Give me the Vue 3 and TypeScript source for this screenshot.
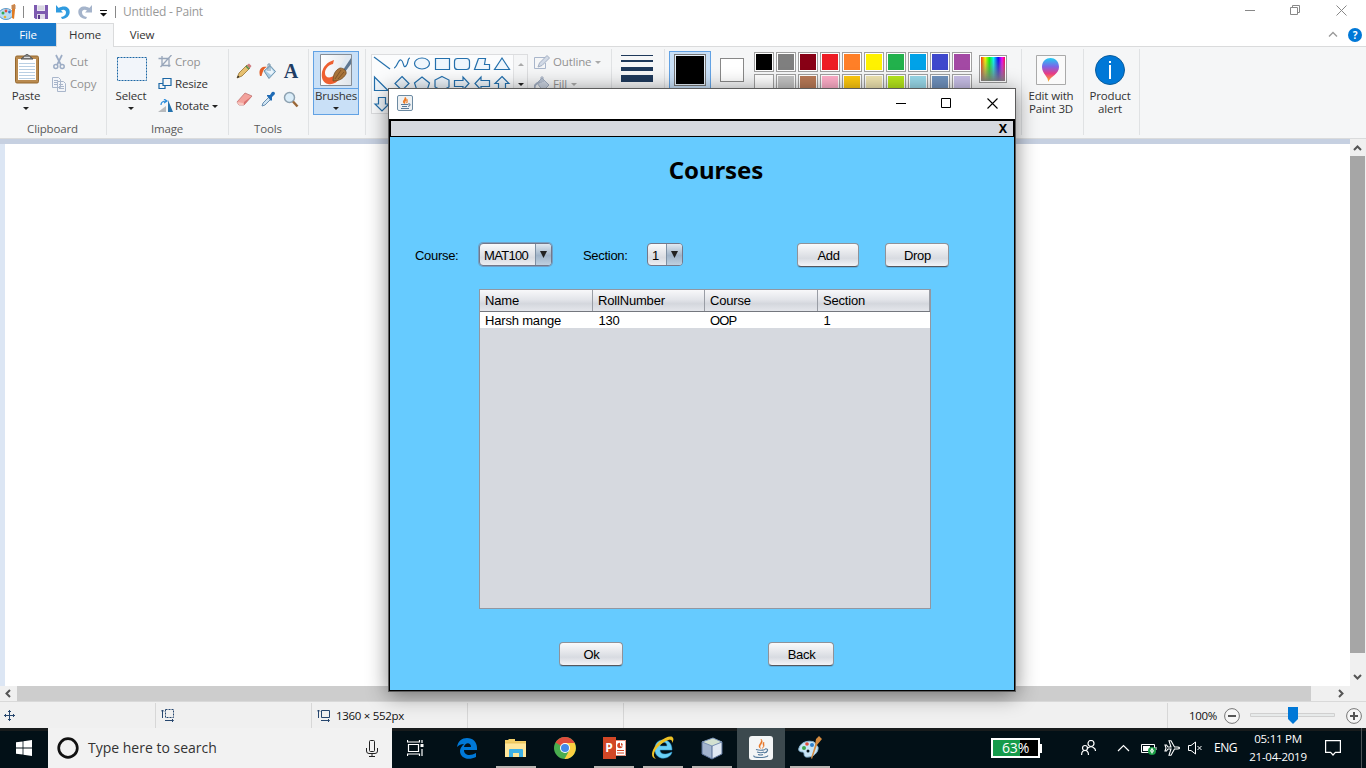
<script setup lang="ts">
const swatches: string[][] = [
  ['#000000', '#7f7f7f', '#880015', '#ed1c24', '#ff7f27', '#fff200', '#22b14c', '#00a2e8', '#3f48cc', '#a349a4'],
  ['#ffffff', '#c3c3c3', '#b97a57', '#ffaec9', '#ffc90e', '#efe4b0', '#b5e61d', '#99d9ea', '#7092be', '#c8bfe7'],
]
const shapes: string[] = [
  'M2 2L18 14', 'M2 13C5 13 6 4 9 5S11 14 14 11S15 3 18 3', 'M2.5 8.5a7.5 5.5 0 1 0 15 0a7.5 5.5 0 1 0-15 0',
  'M3.500 3.500h14v11h-14z', 'M5.500 3.500h9q3 0 3 3v5q0 3-3 3h-9q-3 0-3-3v-5q0-3 3-3z', 'M6.500 3.500H13.500L12.500 9.500H17.500V14.500H2.500L6.500 3.500', 'M10 3L17.500 14.500H2.500Z',
  'M2.500 2V15.500H16Z', 'M10 1.500L17 8.500L10 15.500L3 8.500Z', 'M10 2L17.500 8L15 15.500H5L2.500 8Z', 'M10 1.500L17 5V12L10 15.500L3 12V5Z',
  'M2.500 5.500H11V2L17 8.500L11 15V11.500H2.500Z', 'M17.500 5.500H9V2L3 8.500L9 15V11.500H17.500Z', 'M10 1.500L17 8.500H13.500V16H6.500V8.500H3Z',
  'M6.500 2.500H13.500V9H17L10 16L3 9H6.500Z',
]
const columns: string[] = ['Name', 'RollNumber', 'Course', 'Section']
const record: string[] = ['Harsh mange', '130', 'OOP', '1']
</script>

<template>
  <div class="desktop">
    <header class="titlebar">
      <svg class="app-ico" width="17" height="18" viewBox="0 0 17 18">
        <ellipse cx="6" cy="11" rx="7" ry="5.500" fill="#b9dcf3" stroke="#5d9bc9" />
        <circle cx="3" cy="10" r="1.500" fill="#35a853" /><circle cx="6" cy="8" r="1.400" fill="#e34f3e" /><circle cx="9.500" cy="9" r="1.400" fill="#3579cf" /><circle cx="5" cy="14" r="1.300" fill="#e8b030" />
        <path d="M12 2l3-1v6l-1 9-2-1z" fill="#e07b23" /><path d="M11.500 2h4v4h-4z" fill="#c78750" />
      </svg>
      <i class="tsep"></i>
      <svg class="save" width="14" height="14" viewBox="0 0 14 14"><path d="M0 0h14v14H1.500L0 12.500z" fill="#7d5ab0" /><path d="M3 0h8v6H3z" fill="#e9e6f3" /><path d="M4 2h6M4 4h6" stroke="#bbb" stroke-width=".7" /><path d="M3 9h8v5H3z" fill="#dedae8" /><path d="M4 10h2v4H4z" fill="#5a3b8a" /></svg>
      <svg class="undo" width="14" height="14" viewBox="0 0 14 14"><path d="M0 0v7.500h7L5 5.500C7.500 4 10 5 10 7.500c0 2.500-2 4-5 4.500l1 2c5-.5 7.700-3.500 7.700-7C13.700 1.500 7.500 0 2.700 3z" fill="#2f9be0" /></svg>
      <svg class="redo" width="14" height="14" viewBox="0 0 14 14"><path d="M14 0v7.500H7L9 5.500C6.500 4 4 5 4 7.500c0 2.500 2 4 5 4.500l-1 2C3 13.500.3 10.500.3 7 .3 1.500 6.500 0 11.300 3z" fill="#a5b4cb" /></svg>
      <svg class="qat" width="7" height="7" viewBox="0 0 7 7"><path d="M0 0h7v1H0zM0 3h7L3.500 6.500z" fill="#111" /></svg>
      <i class="tsep two"></i>
      <span class="doc">Untitled - Paint</span>
      <div class="syscmds">
        <svg width="10" height="11" viewBox="0 0 10 11"><path d="M0 5.500h10" stroke="#888" /></svg>
        <svg width="11" height="11" viewBox="0 0 11 11"><path d="M.5 2.500h7v7h-7zM2.500 2.500v-2h7v7h-2" fill="none" stroke="#888" /></svg>
        <svg width="11" height="11" viewBox="0 0 11 11"><path d="M.5.5l10 10M10.500.5l-10 10" stroke="#888" /></svg>
      </div>
    </header>
    <nav class="tabs">
      <b class="file">File</b><b class="home">Home</b><b class="view">View</b>
      <div class="help">
        <svg width="10" height="6" viewBox="0 0 10 6"><path d="M1 5.500l4-4 4 4" fill="none" stroke="#999" stroke-width="1.300" /></svg>
        <b class="q">?</b>
      </div>
    </nav>
    <section class="ribbon">
      <div class="group clip">
        <div class="tools-row">
          <div class="big paste">
            <svg width="26" height="32" viewBox="0 0 26 32"><rect x="1.500" y="3" width="23" height="27" rx="1.500" fill="#b98a4f" stroke="#96682f" /><path d="M4 6h18v21H4z" fill="#fff" /><path d="M5 10.500h16M5 13.500h16M5 16.500h16M5 19.500h16M5 22.500h16M5 25.500h16" stroke="#b9cfe3" /><path d="M7 6l3-2.500q3-4 6 0l3 2.500z" fill="#888" stroke="#555" /><path d="M10 4.500h6" stroke="#ddd" /></svg>
            <span>Paste</span><i class="tri"></i>
          </div>
          <div class="list off">
            <div><svg width="14" height="16" viewBox="0 0 14 16"><path d="M4 1l5 10M10 1L5 11" stroke="#9dadc5" stroke-width="1.700" fill="none" /><circle cx="3.800" cy="12.500" r="2" fill="none" stroke="#9dadc5" stroke-width="1.500" /><circle cx="10.200" cy="12.500" r="2" fill="none" stroke="#9dadc5" stroke-width="1.500" /></svg><span>Cut</span></div>
            <div><svg width="16" height="16" viewBox="0 0 16 16"><path d="M1.500 1.500h6l2 2v8h-8zM6.500 5.500h6l2 2v8h-8z" fill="#f3f5f9" stroke="#a9b6cb" /><path d="M3 4.500h4M3 6.500h3M3 8.500h3M8 8.500h4M8 10.500h5M8 12.500h5" stroke="#a9b6cb" /></svg><span>Copy</span></div>
          </div>
        </div>
        <span class="gname">Clipboard</span>
      </div>
      <div class="group image">
        <div class="tools-row">
          <div class="big select">
            <svg width="30" height="32" viewBox="0 0 30 32"><rect x=".5" y="4.500" width="29" height="23" fill="#f2f5fa" stroke="#1c67a5" stroke-dasharray="2 1" /></svg>
            <span>Select</span><i class="tri"></i>
          </div>
          <div class="list">
            <div class="off"><svg width="14" height="14" viewBox="0 0 14 14"><path d="M0 3.500h10.500V12M3.500 1v9.500H12M2 12L13 0" fill="none" stroke="#98a6ba" stroke-width="1.300" /></svg><span>Crop</span></div>
            <div><svg width="14" height="14" viewBox="0 0 14 14"><path d="M4.500 1.500h8v7h-8zM4.500 6.500h-4v5h6v-3" fill="none" stroke="#1c67a5" stroke-width="1.200" /></svg><span>Resize</span></div>
            <div><svg width="15" height="14" viewBox="0 0 15 14"><path d="M0 13l8-6v6z" fill="#b7babd" /><path d="M10 1v12h5z" fill="#2472ae" /><path d="M3 6q0-4 5-4M6 0l3 2-3 2" fill="none" stroke="#298bdb" stroke-width="1.200" /></svg><span>Rotate</span><i class="tri"></i></div>
          </div>
        </div>
        <span class="gname">Image</span>
      </div>
      <div class="group tools">
        <div class="toolgrid">
          <svg width="16" height="16" viewBox="0 0 16 16"><path d="M1 15l2-5 8-8 3 3-8 8z" fill="#e6c070" stroke="#967232" stroke-width=".8" /><path d="M11 2l2-1.500L15.500 3 14 5z" fill="#cf7c80" /><path d="M1 15l1-2.500L3.500 14z" fill="#222" /><path d="M10 3l3 3" stroke="#4d8f54" stroke-width="1.500" /></svg>
          <svg width="17" height="17" viewBox="0 0 17 17"><path d="M5 8l6-5.500 5.500 6-6.500 7z" fill="#a9cce4" stroke="#55819f" stroke-width=".8" /><path d="M7 8l4-4 4 5-3 3z" fill="#eaf4fb" /><path d="M9 8V1h2v7" stroke="#7695ac" fill="none" /><path d="M1 13C-1 6 3 3 8 4 5 5 4 8 2.500 13z" fill="#e45f28" /></svg>
          <b class="letter">A</b>
          <svg width="17" height="15" viewBox="0 0 17 15"><path d="M1 10L9 1l7 3-8 9H3z" fill="#f3a29c" stroke="#b76967" stroke-width=".7" /><path d="M8 10l8-6-8 9z" fill="#d96f6d" /><path d="M1 10l6 1 1 2H3z" fill="#f8c8c0" /></svg>
          <svg width="16" height="16" viewBox="0 0 16 16"><path d="M2 15l1-3 6-6 2 2-6 6z" fill="#cfe4f3" stroke="#5c86aa" stroke-width=".9" /><path d="M7 4l3 0 2-3q3-1 3 2l-3 3 0 3-1 1-4-5z" fill="#1f6bb5" /></svg>
          <svg width="16" height="17" viewBox="0 0 16 17"><circle cx="6.500" cy="6.500" r="5" fill="#daedf9" stroke="#8ea2b1" stroke-width="1.500" /><path d="M10 10.500l4.500 5" stroke="#9a6737" stroke-width="2.500" /></svg>
        </div>
        <span class="gname">Tools</span>
      </div>
      <div class="group brushes">
        <div class="brushbtn">
          <div class="brushpic"><svg width="32" height="32" viewBox="0 0 32 32"><defs><linearGradient id="bg"><stop offset="0" stop-color="#fff" /><stop offset="1" stop-color="#dfe4e9" /></linearGradient></defs><path d="M.5.5h31v31H.500z" fill="url(#bg)" stroke="#858d96" /><path d="M14 6l-1 4C8 11 5 15 5 19c0 5 5 6 10 2l5 3c-3 5-8 7-12 6-5-1-7-6-6-12C3 13 7 8 14 6z" fill="#ee6030" /><path d="M31 1h-4l-7 12 5 5 6-8z" fill="#dfe8f1" /><path d="M31 4l-8 12 2 2 6-8z" fill="#5d7690" /><path d="M13 27c0-6 2-11 7-13 4 0 7 3 6 6-3 5-7 7-13 7z" fill="#a87439" stroke="#6a4622" stroke-width=".7" /><path d="M15 25l6-9M18 25l6-7" stroke="#704820" stroke-width=".7" /></svg></div>
          <span>Brushes</span><i class="tri"></i>
        </div>
      </div>
      <div class="group shapes">
        <div class="gallery">
          <div class="cells"><svg v-for="(d, i) in shapes" :key="i" width="20" height="20" viewBox="0 0 20 20"><path :d="d" :fill="i < 2 ? 'none' : '#eff6fc'" stroke="#2470ad" stroke-width="1.200" /></svg></div>
          <div class="gscroll"><i class="tri up"></i><i class="tri"></i></div>
        </div>
        <div class="list off style">
          <div><svg width="16" height="15" viewBox="0 0 16 15"><path d="M.5 2.500h11M.5 2.500v11h11V8" fill="none" stroke="#a9b6cb" /><path d="M4 12l1.500-4L13 .500 15.500 3 8 10.500z" fill="#d2dae6" stroke="#a3afc3" /></svg><span>Outline</span><i class="tri"></i></div>
          <div><svg width="16" height="16" viewBox="0 0 16 16"><path d="M3 7l5-5 7 7-6 6z" fill="#cbd3e0" stroke="#a1adc0" /><path d="M1 14q-2-6 5-8" fill="none" stroke="#a1adc0" stroke-width="2" /><path d="M7 7V1h2v5" fill="none" stroke="#a1adc0" /></svg><span>Fill</span><i class="tri"></i></div>
        </div>
      </div>
      <div class="group size"><i class="l1"></i><i class="l2"></i><i class="l3"></i><i class="l4"></i></div>
      <div class="group colors">
        <div class="c1"><i></i></div>
        <i class="c2"></i>
        <div class="palette"><template v-for="(row, r) in swatches" :key="r"><i v-for="c in row" :key="c" :style="{ backgroundColor: c }"></i></template></div>
        <i class="spectrum"></i>
      </div>
      <div class="group p3d">
        <svg width="30" height="30" viewBox="0 0 30 30"><defs><linearGradient id="pin" x2="0" y2="1"><stop offset="0" stop-color="#20cdf2" /><stop offset=".35" stop-color="#7a67e8" /><stop offset=".65" stop-color="#e73b86" /><stop offset="1" stop-color="#ffbd20" /></linearGradient></defs><path d="M.5.5h29v29H.500z" fill="#fafafa" stroke="#aaa" /><path d="M12 27c1-5-6-8-6-15 0-12 17-12 17 0 0 7-8 9-11 15z" fill="url(#pin)" /></svg>
        <span>Edit with<br />Paint 3D</span>
      </div>
      <div class="group alert">
        <svg width="30" height="30" viewBox="0 0 30 30"><circle cx="15" cy="15" r="14.500" fill="#0078d7" stroke="#0b5c9c" /><path d="M15 10v14" stroke="#fff" stroke-width="2" /><path d="M15 6v2" stroke="#fff" stroke-width="2" /></svg>
        <span>Product<br />alert</span>
      </div>
    </section>
    <main class="workspace">
      <div class="viewport"><div class="canvas"></div></div>
      <div class="vscroll">
        <svg width="15" height="17" viewBox="0 0 15 17"><path d="M4 11l3.500-3.500L11 11" fill="none" stroke="#555" stroke-width="2" /></svg>
        <i></i>
        <svg width="15" height="17" viewBox="0 0 15 17"><path d="M4 7l3.500 3.500L11 7" fill="none" stroke="#555" stroke-width="2" /></svg>
      </div>
    </main>
    <div class="hscroll">
      <svg width="17" height="15" viewBox="0 0 17 15"><path d="M10 4L6.500 7.500 10 11" fill="none" stroke="#555" stroke-width="2" /></svg>
      <i></i>
      <svg class="right" width="17" height="15" viewBox="0 0 17 15"><path d="M6 4l3.500 3.500L6 11" fill="none" stroke="#555" stroke-width="2" /></svg>
    </div>
    <footer class="status">
      <div class="cell"><svg width="11" height="11" viewBox="0 0 11 11"><path d="M5.500 0v11M0 5.500h11M4 2l1.500-1.500L7 2M4 9l1.500 1.500L7 9M2 4L.5 5.500 2 7M9 4l1.500 1.500L9 7" fill="none" stroke="#26466e" /></svg></div>
      <div class="cell"><svg width="14" height="13" viewBox="0 0 14 13"><path d="M4.500.5h8v8h-8z" fill="none" stroke="#26466e" stroke-dasharray="2 1" /><path d="M1.500 9V1M0 2.500L1.500 1 3 2.500M4 11.500h8M11 10l1.500 1.500L11 13" fill="none" stroke="#26466e" /></svg></div>
      <div class="cell"><svg width="14" height="13" viewBox="0 0 14 13"><path d="M4.500 1.500h8v7h-8zM1.500 9V1M0 2.500L1.500 1 3 2.500M4 11.500h8M11 10l1.500 1.500L11 13" fill="none" stroke="#26466e" /></svg><span>1360 × 552px</span></div>
      <div class="cell"></div>
      <div class="cell wide"></div>
      <div class="zoom">
        <span>100%</span>
        <svg width="16" height="16" viewBox="0 0 16 16"><circle cx="8" cy="8" r="7.400" fill="#f6f6f6" stroke="#777" /><path d="M4 8h8" stroke="#555" stroke-width="2" /></svg>
        <svg width="85" height="18" viewBox="0 0 85 18"><path d="M.5 6.500h84v3H.500z" fill="#e7eaea" stroke="#d0d0d0" /><path d="M38 0h10v12l-5 5-5-5z" fill="#0078d7" /></svg>
        <svg width="16" height="16" viewBox="0 0 16 16"><circle cx="8" cy="8" r="7.400" fill="#f6f6f6" stroke="#777" /><path d="M4 8h8M8 4v8" stroke="#555" stroke-width="2" /></svg>
      </div>
    </footer>
    <footer class="taskbar">
      <div class="start"><svg width="16" height="16" viewBox="0 0 16 16"><path d="M0 2.300L6.600 1.400V7.600H0zM7.400 1.200L16 0V7.600H7.400zM0 8.400H6.600V14.600L0 13.700zM7.400 8.400H16V16L7.400 14.800z" fill="#fff" /></svg></div>
      <div class="search">
        <svg width="22" height="22" viewBox="0 0 22 22"><circle cx="11" cy="11" r="9.300" fill="none" stroke="#111" stroke-width="2.700" /></svg>
        <span>Type here to search</span>
        <svg class="mic" width="12" height="17" viewBox="0 0 12 17"><rect x="3.500" y=".5" width="5" height="11" rx="1" fill="none" stroke="#222" /><path d="M.5 8v3q0 2.500 2.500 2.500h6q2.500 0 2.500-2.500V8M6 13.500V16M3 16.500h6" fill="none" stroke="#222" /></svg>
      </div>
      <div class="taskview"><svg width="17" height="16" viewBox="0 0 17 16"><path d="M1.500 4.500h10v7h-10zM.500 0v2h12V0M.500 16v-2h12v2M15 0v3M15 9v7" fill="none" stroke="#fff" stroke-width="1.200" /><path d="M13.500 4h3v3h-3z" fill="#fff" /></svg></div>
      <div class="app"><svg width="20" height="21" viewBox="0 0 20 21"><path d="M0 9C1 3 5 0 10 0c6 0 10 4 10 10v2H7c0 6 7 6 12 3v4C11 23 3 20 3 13c0-3 2-5 4-7-3 .3-5 1-7 3zm7 0h7c0-5-6-5-7 0z" fill="#0078d7" /></svg></div>
      <div class="app run"><svg width="22" height="19" viewBox="0 0 22 19"><path d="M0 1h3l1-1h6v2h11v16H0z" fill="#f3cf68" /><path d="M0 4h21v14H0z" fill="#ffe79b" /><path d="M0 4h21" stroke="#e2b94e" stroke-width=".7" /><path d="M4 18v-7q0-1 1-1h12q1 0 1 1v7h-4v-4H8v4z" fill="#3db1e6" /></svg></div>
      <div class="app"><svg width="22" height="22" viewBox="0 0 22 22"><circle cx="11" cy="11" r="11" fill="#4aad4f" /><path d="M11 11L1.500 5.500A11 11 0 0 1 20.500 5.500L21 6H11z" fill="#df4d3d" /><path d="M20.600 6A11 11 0 0 1 10.500 22L15.500 13 11 6z" fill="#fdcf41" /><circle cx="11" cy="11" r="5" fill="#fff" /><circle cx="11" cy="11" r="4" fill="#4389e8" /></svg></div>
      <div class="app run"><div class="ppt"><b>P</b><svg width="10" height="18" viewBox="0 0 10 18"><path d="M0 1h10v16H0z" fill="#fff" /><path d="M0 1.500h9.500v15H0" fill="none" stroke="#d24726" stroke-width=".6" /><circle cx="4" cy="6.500" r="2.800" fill="#d24726" /><path d="M4.500 3v4h3" fill="none" stroke="#fff" /><path d="M1 11.500h7M1 14h7" stroke="#d24726" /></svg></div></div>
      <div class="app run"><svg width="24" height="24" viewBox="0 0 24 24"><path d="M4 11C5 6 8 4 12 4c6 0 9 4 9 10H9c0 5 6 5 12 2-2 9-19 9-17-5zm5-1h7c0-5-6-5-7 0z" fill="#6bd0f5" stroke="#2897d3" stroke-width=".5" /><path d="M5 23C-2 22 1 12 8 6c6-5 13-7 14-4 1 1 0 4-1 5 1-6-6-3-12 2-6 5-8 11-4 14z" fill="#eec225" /></svg></div>
      <div class="app run"><svg width="22" height="23" viewBox="0 0 22 23"><path d="M1 5l11-4 9 4v12l-10 5-10-5z" fill="#b8c9dd" /><path d="M1 5l10 4v13L1 17z" fill="#a2b4ce" /><path d="M11 9l10-4v12l-10 5z" fill="#e0e8f2" /><path d="M1 5l11-4 9 4-10 4z" fill="#d3e1d1" stroke="#7890b4" /><path d="M1 5v12l10 5V9M21 5v12l-10 5" fill="none" stroke="#536a91" /></svg></div>
      <div class="app active"><svg width="24" height="24" viewBox="0 0 24 24"><rect width="24" height="24" rx="3" fill="#f3f5f6" /><path d="M11.500 12.500C7 9 14 7.500 12 3c4 4.500-3 5.500-.5 9.500M13 12.500c3.500-3-1-4 2-6.500-.5 2.500 1.500 4-2 6.500" fill="#e87524" stroke="#e87524" stroke-width=".5" /><path d="M7 13.500q5 1.500 9 0M8 16q4 1.500 7 0M9 18.500q3 1 5 0M16 13q3-.5 2.500 1.500T15 17M5 19.500q-1 2 6 2t8-2" fill="none" stroke="#53799b" stroke-width="1.100" /></svg></div>
      <div class="app run"><svg width="24" height="24" viewBox="0 0 24 24"><path d="M1 12C3 6 10 4 16 6l4 5c1 5-5 11-12 10-3-1-1-4-3-5-3 0-5-1-4-4z" fill="#c8e5f7" stroke="#8bb7d4" /><circle cx="6" cy="12" r="2" fill="#3ba74c" /><circle cx="9" cy="8" r="1.800" fill="#e04c3a" /><circle cx="14" cy="9" r="2" fill="#2f7fca" /><circle cx="10" cy="15" r="1.500" fill="#08171d" /><path d="M18 3l3-3 3 3-5 6-5 14-1-1 4-13z" fill="#d58b40" /></svg></div>
      <div class="tray">
        <div class="battery"><b>63%</b></div>
        <svg class="people" width="15" height="16" viewBox="0 0 15 16"><circle cx="10" cy="3.500" r="3" fill="none" stroke="#fff" stroke-width="1.200" /><circle cx="4" cy="8" r="2.500" fill="none" stroke="#fff" stroke-width="1.200" /><path d="M.6 15q0-4.500 3.400-4.500T7.500 15M7 8q3-2.500 6 0 1.500 1 1.500 3" fill="none" stroke="#fff" stroke-width="1.200" /></svg>
        <svg class="chev" width="13" height="8" viewBox="0 0 13 8"><path d="M1 7l5.500-5.500L12 7" fill="none" stroke="#fff" stroke-width="1.200" /></svg>
        <svg class="bat" width="16" height="13" viewBox="0 0 16 13"><path d="M.5 2.500h13v8H.5zM15 5v3" fill="none" stroke="#fff" /><path d="M2 4h7v5H2z" fill="#fff" /><circle cx="11" cy="9" r="4" fill="#1c9d46" /><path d="M11 6.500q3 3 0 4-3-1 0-4v5" fill="none" stroke="#fff" /></svg>
        <svg class="plane" width="16" height="16" viewBox="0 0 16 16"><path d="M1 5h1.500L4 7h3L5 .800h2L10.500 7h3q2 0 2 1t-2 1h-3L7 15.200H5L7 9H4l-1.500 2H1l1-3z" fill="none" stroke="#fff" stroke-width="1.100" /></svg>
        <svg class="vol" width="15" height="14" viewBox="0 0 15 14"><path d="M.5 4.500H3L7.500 1v12L3 9.500H.500zM9.500 5l4 4M13.500 5l-4 4" fill="none" stroke="#fff" /></svg>
        <span class="eng">ENG</span>
        <div class="clock"><span>05:11 PM</span><span>21-04-2019</span></div>
        <svg class="note" width="16" height="16" viewBox="0 0 16 16"><path d="M.6.600h14.800v11.800h-5L8 15l-2.400-2.600h-5z" fill="none" stroke="#fff" stroke-width="1.200" /></svg>
        <i class="peek"></i>
      </div>
    </footer>

    <section class="jwin">
      <div class="jtitle">
        <svg class="java" width="16" height="16" viewBox="0 0 16 16"><rect x=".5" y=".5" width="15" height="15" rx="1.500" fill="#eef1f3" stroke="#6c8aa2" /><path d="M8 8.500C4 6 9.500 5 8 2.500c3 3-2 3.500 0 6M9.500 8c2-2-1-2 1-3.500" fill="none" stroke="#ed7b25" stroke-width="1.200" /><path d="M4 9.500h7M5 11.500h5M11 9q3-1 2 1.500L11 11.500M4 13.500h8" fill="none" stroke="#597a99" /></svg>
        <div class="jcmds">
          <svg width="11" height="11" viewBox="0 0 11 11"><path d="M0 5.500h10" stroke="#000" /></svg>
          <svg width="11" height="11" viewBox="0 0 11 11"><path d="M.5.5h9v9h-9z" fill="none" stroke="#000" /></svg>
          <svg width="11" height="11" viewBox="0 0 11 11"><path d="M.5.5l10 10M10.500.5l-10 10" stroke="#000" stroke-width="1.100" /></svg>
        </div>
      </div>
      <div class="jbar"><b>X</b></div>
      <div class="panel">
        <h1>Courses</h1>
        <div class="form">
          <label class="lc">Course:</label>
          <div class="combo focus"><span>MAT100</span><i><svg width="7" height="7" viewBox="0 0 7 7"><path d="M0 0h7L3.500 7z" fill="#222" /></svg></i></div>
          <label class="ls">Section:</label>
          <div class="combo short"><span>1</span><i><svg width="7" height="7" viewBox="0 0 7 7"><path d="M0 0h7L3.500 7z" fill="#222" /></svg></i></div>
          <button class="add">Add</button>
          <button class="drop">Drop</button>
        </div>
        <div class="table">
          <div class="thead"><span v-for="c in columns" :key="c">{{ c }}</span></div>
          <div class="trow"><span v-for="c in record" :key="c">{{ c }}</span></div>
        </div>
        <div class="actions"><button class="ok">Ok</button><button class="back">Back</button></div>
      </div>
    </section>
  </div>
</template>

<style>
html, body { margin: 0; overflow: hidden; }
</style>
<style scoped>
* { box-sizing: border-box; }
svg { display: block; flex: none; }
b { font-weight: 400; }
.desktop { width: 1366px; height: 768px; overflow: hidden; position: relative; display: flex; flex-direction: column; background: #fff; font: 11.500px/14px "Open Sans", "Noto Sans", sans-serif; letter-spacing: -.15px; color: #333; }
.titlebar { height: 23px; flex: none; display: flex; align-items: center; }
.tsep { width: 1px; height: 12px; background: #888; margin: 0 10px 0 6px; }
.save { margin-right: 8px; }
.undo { margin-right: 8px; }
.redo { margin-right: 8px; }
.qat { margin-top: 4px; }
.tsep.two { margin: 0 7px 0 8px; }
.doc { color: #999; font-size: 12px; letter-spacing: -.22px; }
.syscmds { margin: -3px 19px 0 auto; display: flex; gap: 35px; }
.tabs { height: 24px; flex: none; display: flex; border-bottom: 1px solid #dadbdc; }
.tabs b { width: 56px; height: 23px; line-height: 23px; text-align: center; }
.tabs .file { background: #1979ca; color: #fff; }
.tabs .home { width: 58px; height: 24px; border: 1px solid #dadbdc; border-bottom: 0; background: #f5f6f7; line-height: 22px; }
.help { margin-left: auto; margin-right: 4px; display: flex; align-items: center; gap: 10px; }
.tabs .help .q { width: 14px; height: 14px; line-height: 14px; border-radius: 50%; background: #0078d7; color: #fff; font-size: 10px; font-weight: 700; }
.tabs .help svg { margin-top: -2px; }
.ribbon { height: 92px; flex: none; display: flex; background: #f5f6f7; border-bottom: 1px solid #dadbdc; }
.group { position: relative; height: 88px; flex: none; display: flex; flex-direction: column; align-items: center; }
.group::after { content: ""; position: absolute; right: 0; top: 2px; height: 86px; width: 1px; background: #e0e2e4; }
.gname { margin-top: auto; margin-bottom: -1px; margin-left: -2px; color: #5a5a5a; letter-spacing: -.15px; }
.tools-row { display: flex; width: 100%; }
.tri { flex: none; width: 0; height: 0; border: 3px solid transparent; border-top-color: #222; border-bottom: 0; }
.big { display: flex; flex-direction: column; align-items: center; padding-top: 6px; width: 36px; }
.big span { margin: 4px 2px 4px 0; }
.big .tri { margin-right: 2px; }
.list { display: flex; flex-direction: column; padding-top: 4px; }
.list div { height: 22px; display: flex; align-items: center; gap: 4px; }
.list span { font-size: 11.500px; }
.off { color: #929292; }
.off .tri { border-top-color: #aaa; }
.clip { width: 107px; }
.paste { margin-left: 9px; }
.clip .list { margin-left: 6px; }
.clip .list svg { width: 16px; }
.clip .list div { gap: 3px; }
.image { width: 122px; }
.select { margin-left: 7px; }
.image .list { margin-left: 8px; }
.image .list svg { width: 15px; margin-right: -1px; }
.image .list div { gap: 3px; }
.tools { width: 80px; }
.toolgrid { display: grid; grid-template-columns: repeat(3, 23.500px); grid-template-rows: 28px 28px; place-items: center; margin-top: 10px; margin-left: -3px; }
.letter { font: 700 20px/20px "Liberation Serif", serif; color: #1f3d65; }
.brushes { width: 57px; align-items: flex-start; }
.brushbtn { margin: 4px 0 0 4px; width: 46px; height: 64px; border: 1px solid #62a2e4; background: #c9e0f7; display: flex; flex-direction: column; align-items: center; }
.brushpic { width: 44px; height: 37px; padding: 2px 0 0 6px; border-bottom: 1px solid #62a2e4; flex: none; }
.brushbtn span { margin-top: 0; margin-bottom: 4px; letter-spacing: -.25px; }
.shapes { width: 246px; flex-direction: row; align-items: flex-start; }
.gallery { display: flex; margin: 7px 0 0 5px; width: 157px; height: 60px; border: 1px solid #dcdddf; background: #fbfcfd; }
.cells { display: grid; grid-template-columns: repeat(7, 20px); width: 141px; height: 58px; }
.gscroll { width: 14px; border-left: 1px solid #e2e3e5; padding-top: 8px; display: flex; flex-direction: column; align-items: center; gap: 17px; background: #f5f6f7; }
.tri.up { border-top: 0; border-bottom: 3px solid #aaa; }
.style { margin-left: 6px; }
.style div { gap: 3px; }
.style .tri { margin-left: 1px; }
.size { width: 53px; align-items: flex-start; padding: 8px 0 0 9px; }
.size i { width: 32px; background: #1e395b; }
.l1 { height: 1px; margin-bottom: 4px; } .l2 { height: 2px; margin-bottom: 5px; } .l3 { height: 4px; margin-bottom: 4px; } .l4 { height: 7px; }
.colors { width: 357px; flex-direction: row; align-items: flex-start; }
.c1 { margin: 4px 0 0 4px; width: 42px; height: 64px; border: 1px solid #62a2e4; background: #c9e0f7; padding: 2px 0 0 4px; }
.c1 i { display: block; width: 32px; height: 32px; border: 1px solid #777; background: #000; box-shadow: inset 0 0 0 1px #e4effa; }
.c2 { margin: 11px 0 0 9px; width: 24px; height: 24px; border: 1px solid #888; background: #fff; }
.palette { margin: 5px 0 0 10px; display: grid; grid-template-columns: repeat(10, 20px); gap: 2px; }
.palette i { height: 20px; border: 1px solid #a0a0a0; box-shadow: inset 0 0 0 1px #fff; }
.spectrum { margin: 8px 0 0 7px; width: 28px; height: 28px; border: 1px solid #999; box-shadow: inset 0 0 0 1px #fff; background: linear-gradient(transparent, #808080), linear-gradient(90deg, red, #ff0 20%, #0f0 36%, #0ff 52%, #00f 70%, #f0f 85%, red); }
.p3d, .alert { padding-top: 8px; text-align: center; }
.p3d { width: 62px; } .alert { width: 56px; }
.p3d svg { margin-left: -4px; } .alert svg { margin-left: -4px; }
.p3d span, .alert span { margin: 4px 0 0 -4px; line-height: 13px; }
.workspace { height: 547px; flex: none; display: flex; }
.viewport { width: 1350px; padding: 5px 0 0 5px; background: linear-gradient(#c6d0e1 0 5px, #dce6f4 5px); }
.canvas { height: 542px; background: #fff; }
.vscroll { width: 16px; background: #f0f0f0; height: 547px; }
.vscroll i { display: block; height: 497px; width: 15px; background: #a6a6a6; margin-bottom: 15px; }
.hscroll { height: 15px; flex: none; display: flex; background: #f0f0f0; }
.hscroll i { width: 1294px; background: #cdcdcd; }
.hscroll .right { margin-left: 22px; }
.status { height: 27px; flex: none; background: #f0f0f0; display: flex; margin-top: 0; border-top: 1px solid #d9d9d9; padding-top: 1px; color: #111; }
.status .cell { width: 156px; border-right: 1px solid #d7d7d7; display: flex; align-items: center; padding-left: 5px; gap: 5px; letter-spacing: -.3px; }
.status .cell:first-child { padding-left: 4px; }
.status .cell.wide { width: 544px; }
.zoom { margin-left: auto; display: flex; align-items: center; padding-right: 4px; }
.zoom span { margin-right: 7px; letter-spacing: -.3px; }
.zoom svg:nth-of-type(2) { margin: 0 11px 0 10px; }
.taskbar { height: 40px; flex: none; display: flex; background: linear-gradient(#171b1c 0 3px, #021017 3px); color: #fff; }
.start { width: 48px; display: grid; place-items: center; }
.search { width: 344px; background: #f2f2f2; display: flex; align-items: center; padding-left: 9px; color: #333; }
.search span { margin-left: 9px; font-size: 14px; letter-spacing: 0; }
.mic { margin: 0 14px 0 auto; }
.taskview { width: 51px; padding: 12px 0 0 15px; }
.app { width: 48px; margin-right: 1px; display: grid; place-items: center; position: relative; }
.app svg { grid-area: 1 / 1; }
.run::after { content: ""; position: absolute; left: 4px; right: 4px; bottom: 0; height: 2px; background: #b8b5b2; }
.active { background: #3c494e; }
.ppt { display: flex; align-items: center; }
.ppt b { width: 13px; height: 22px; background: #d24726; font: 700 12px/22px "Open Sans", sans-serif; text-align: center; }
.tray { margin-left: auto; display: flex; align-items: center; height: 40px; }
.battery { width: 49px; height: 20px; margin-right: 41px; border: 2px solid #fff; background: linear-gradient(90deg, #169b4b 60%, #000 60%); position: relative; text-align: center; line-height: 16px; font-size: 14px; }
.battery::after { content: ""; position: absolute; right: -4px; top: 4px; width: 2px; height: 9px; background: #fff; }
.people { margin-right: 21px; }
.chev { margin-right: 11px; }
.bat { margin-right: 7px; }
.plane { margin-right: 8px; }
.vol { margin-right: 11px; }
.eng { width: 24px; font-size: 12px; letter-spacing: -.5px; }
.clock { width: 66px; margin: -1px 14px 0 7px; display: flex; flex-direction: column; align-items: center; line-height: 18px; letter-spacing: -.25px; white-space: nowrap; }
.note { margin-right: 20px; }
.peek { width: 1px; height: 40px; margin-right: 4px; background: #4b5357; }
.jwin { position: absolute; left: 388px; top: 88px; width: 628px; height: 604px; border: 1px solid #5c5c5c; box-shadow: 0 3px 20px rgba(0, 0, 0, .48); background: #fff; font: 13px/16px "Liberation Sans", Arial, sans-serif; letter-spacing: -.18px; color: #000; }
.jtitle { height: 30px; display: flex; align-items: center; padding: 0 17px 2px 8px; }
.jcmds { margin-left: auto; display: flex; gap: 34px; }
.jcmds svg:last-child { margin-left: 1px; }
.jbar { height: 18px; border: 2px solid #000; border-bottom-width: 1px; background: #d6d9df; text-align: right; padding-right: 6px; line-height: 15px; }
.jbar b { font: 700 12.500px/15px "Noto Sans", sans-serif; }
.panel { height: 554px; border: 1px solid #000; border-top: 0; background: #66cbff; }
h1 { margin: 0; padding: 18px 0 0 28px; font: 700 24px/30px "Noto Sans", sans-serif; letter-spacing: -.1px; text-align: center; }
.form { margin-top: 57px; height: 26px; display: flex; align-items: center; padding-left: 25px; }
label { padding-top: 1px; letter-spacing: -.3px; }
.lc { width: 63px; } .ls { width: 64px; margin-left: 31px; }
.combo { width: 74px; height: 23px; margin-top: -1px; border: 1px solid #74788a; border-radius: 4px; display: flex; overflow: hidden; background: linear-gradient(#fafafb, #d8dbe1 65%, #eceef2); line-height: 23px; }
.combo span { flex: 1; padding-left: 4px; letter-spacing: -.7px; }
.combo i { width: 16px; border-left: 1px solid #7f91a4; background: linear-gradient(#e0e8f0, #9fb3c8 55%, #bfd0e0); display: grid; place-items: center; }
.focus { box-shadow: 0 0 0 1px #739fc4; margin-left: 1px; width: 73px; }
.short { width: 36px; }
button { padding: 1px 0 0 1px; height: 24px; border: 1px solid #8f9299; border-bottom-color: #55585f; border-radius: 4px; background: linear-gradient(#fafafb, #d8dbe1 65%, #f3f4f8); font: 13px/21px "Liberation Sans", Arial, sans-serif; letter-spacing: -.3px; color: #000; box-shadow: 0 1px 0 rgba(70, 100, 130, .25); }
.add { width: 62px; margin-left: 114px; }
.drop { width: 64px; margin-left: 26px; }
.table { margin: 21px 0 0 89px; width: 452px; height: 320px; border: 1px solid #9297a1; background: #d6d9df; }
.thead, .trow { display: grid; grid-template-columns: 113px 112px 113px 112px; }
.thead { height: 22px; border-bottom: 1px solid #74777e; line-height: 21px; background: linear-gradient(#f8f8fa, #e3e5ea 45%, #d4d7dd 65%, #e4e6eb); }
.thead span { padding-left: 5px; border-right: 1px solid #999da5; }
.trow { height: 16px; background: #fff; line-height: 17px; }
.trow span { padding-left: 5px; }
.trow span:nth-child(even) { padding-left: 5.500px; }
.trow span:nth-child(3) { letter-spacing: -.9px; }
.actions { margin: 33px 0 0 169px; display: flex; }
.ok { width: 64px; }
.back { width: 66px; margin-left: 145px; }
</style>
